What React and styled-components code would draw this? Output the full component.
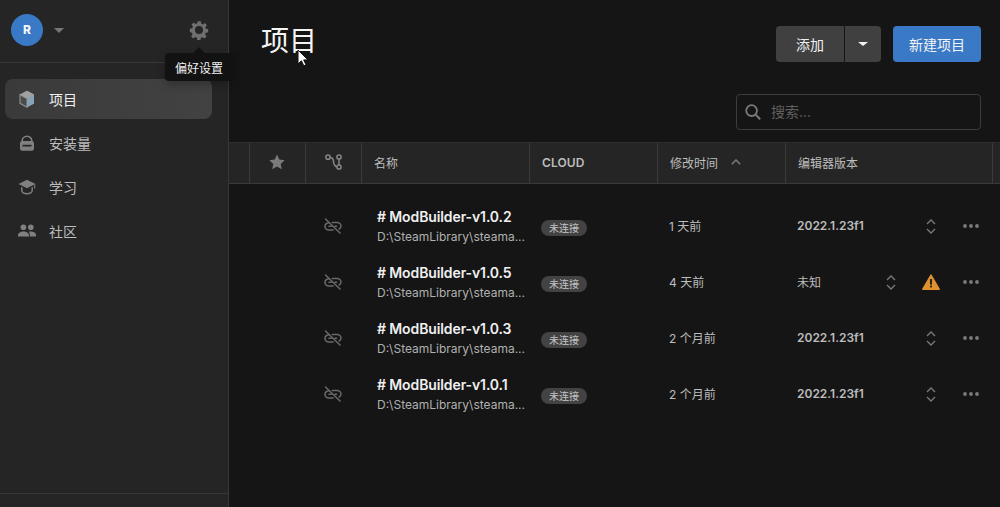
import React from 'react';
import styled, { createGlobalStyle } from 'styled-components';

const Global = createGlobalStyle`
  html, body { margin: 0; height: 100%; background: #151515; overflow: hidden; }
  #root { height: 100%; }
  * { box-sizing: border-box; }
`;

const FONT = `Inter, "Noto Sans CJK SC", "Noto Sans", sans-serif`;

const Shell = styled.div`
  display: flex; width: 1000px; height: 507px; position: relative;
  background: #151515; color: #e4e4e4; font-family: ${FONT}; overflow: hidden;
`;
const Sidebar = styled.aside`
  width: 229px; flex: none; height: 100%; background: #252525;
  border-right: 1px solid #383838; display: flex; flex-direction: column;
`;
const SideHead = styled.div`
  height: 63px; flex: none; border-bottom: 1px solid #383838;
  display: flex; align-items: center; padding: 0 19px 3px 11px; position: relative;
`;
const Avatar = styled.div`
  width: 32px; height: 32px; border-radius: 50%; background: #3a79c6; color: #f4f4f4;
  display: flex; align-items: center; justify-content: center; font-size: 12px; font-weight: 800;
`;
const Caret = styled.span`
  width: 0; height: 0; border-left: 5px solid transparent; border-right: 5px solid transparent;
  border-top: ${p => p.$h || 5}px solid ${p => p.$c || '#777'}; display: block;
`;
const AccountCaret = styled.div` margin-left: 11px; margin-top: 1px; flex: 1; `;
const Tooltip = styled.div`
  position: absolute; left: 165px; top: 53px; width: 68px; height: 28px; background: #121212;
  border-radius: 4px; color: #f0f0f0; font-size: 12px; display: flex; align-items: center;
  justify-content: center; box-shadow: 0 4px 8px rgba(0,0,0,.25); z-index: 5; white-space: nowrap;
  &::before {
    content: ''; position: absolute; left: 28px; top: -6px; width: 0; height: 0;
    border-left: 6px solid transparent; border-right: 6px solid transparent; border-bottom: 6px solid #121212;
  }
`;
const Nav = styled.nav` display: flex; flex-direction: column; padding: 16px 16px 0 5px; flex: 1; gap: 4px; `;
const NavItem = styled.div`
  height: 40px; border-radius: 8px; display: flex; align-items: center; padding: 0 0 1px 12px; gap: 12px;
  background: ${p => p.$active ? 'linear-gradient(90deg,#3a3a3a,#424242)' : 'transparent'};
  color: ${p => p.$active ? '#f0f0f0' : '#bdbdbd'}; font-size: 14px;
`;
const NavIcon = styled.span` width: 20px; height: 20px; display: flex; align-items: center; justify-content: center; flex: none; `;
const SideFoot = styled.div` height: 14px; flex: none; border-top: 1px solid #383838; `;

const Main = styled.main` flex: 1; display: flex; flex-direction: column; min-width: 0; `;
const TopBar = styled.div`
  height: 94px; flex: none; display: flex; justify-content: space-between; align-items: flex-start;
  padding: 19px 19px 0 32px;
`;
const Title = styled.h1` margin: 0; font-size: 28px; font-weight: 400; line-height: 44px; color: #f4f4f4; `;
const Actions = styled.div` display: flex; gap: 12px; margin-top: 7px; `;
const SplitButton = styled.div`
  display: flex; height: 36px; width: 105px; border-radius: 4px; overflow: hidden; background: #404040;
`;
const SplitMain = styled.div`
  width: 69px; border-right: 1px solid #151515; display: flex; align-items: center; justify-content: center;
  font-size: 14px; color: #f0f0f0;
`;
const SplitCaret = styled.div` flex: 1; display: flex; align-items: center; justify-content: center; `;
const Primary = styled.div`
  width: 88px; height: 36px; border-radius: 4px; background: #3a79c6; color: #f4f4f4;
  display: flex; align-items: center; justify-content: center; font-size: 14px;
`;
const SearchRow = styled.div` height: 48px; flex: none; display: flex; justify-content: flex-end; padding-right: 19px; `;
const Search = styled.div`
  width: 245px; height: 36px; border: 1px solid #3c3c3c; border-radius: 4px; display: flex; align-items: center;
  padding: 0 0 2px 8px; gap: 10px; font-size: 14px; color: #606060;
  svg { margin-top: 1px; }
`;
const COLS = '21px 56px 56px 168px 128px 128px 207px 1fr';
const HeaderRow = styled.div`
  display: grid; grid-template-columns: ${COLS}; height: 42px; flex: none; background: #252525;
  border-top: 1px solid #2e2e2e; border-bottom: 1px solid #3a3a3a;
`;
const HeadCell = styled.div`
  display: flex; align-items: center; justify-content: ${p => p.$center ? 'center' : 'flex-start'};
  padding: 0 ${p => p.$center ? 1 : 0}px 2px ${p => p.$center ? 0 : 12}px; font-size: 12px; color: #bdbdbd; gap: 13px;
  border-right: ${p => p.$last ? 'none' : '1px solid #3a3a3a'};
`;
const Cloud = styled.span` font-weight: 600; font-size: 12px; letter-spacing: .1px; `;
const Body = styled.div` padding-top: 14px; display: flex; flex-direction: column; `;
const Row = styled.div` display: grid; grid-template-columns: 76px 56px 168px 128px 128px 1fr; height: 56px; align-items: center; `;
const LinkCell = styled.div` display: flex; justify-content: center; `;
const NameCell = styled.div` padding-left: 16px; display: flex; flex-direction: column; min-width: 0; `;
const Name = styled.div` font-size: 14px; font-weight: 600; color: #f0f0f0; line-height: 20px; white-space: nowrap; letter-spacing: -.11px; `;
const Path = styled.div` font-size: 12px; color: #b0b0b0; line-height: 18px; margin-top: 1px; white-space: nowrap; `;
const CloudCell = styled.div` display: flex; padding-left: 12px; padding-top: 4px; `;
const Badge = styled.span`
  display: flex; align-items: center; justify-content: center; width: 46px; height: 16px; border-radius: 8px;
  background: #434343; color: #c4c4c4; font-size: 10px; line-height: 1;
`;
const TimeCell = styled.div` padding: 0 0 2px 12px; font-size: 12px; color: #bdbdbd; `;
const VersionCell = styled.div` display: flex; align-items: center; padding: 0 9px 0 12px; `;
const Version = styled.div` flex: 1; font-size: 12px; padding-bottom: 2px; font-weight: ${p => p.$bold ? 600 : 400}; color: #bdbdbd; `;
const Slot = styled.div` width: 40px; display: flex; justify-content: center; align-items: center; `;

const Cursor = styled.svg` position: absolute; left: 297px; top: 49px; z-index: 6; `;

const Gear = () => (
  <svg width="20" height="20" viewBox="0 0 24 24" fill="#6f6f6f">
    <path fillRule="evenodd" d="M14.2 1.5l.5 3 1.9.8 2.5-1.8 2.4 2.9-1.9 2.3.8 1.9 2.6.6v3.6l-2.9.5-.8 1.9 1.7 2.5-2.5 2.6-2.4-1.7-1.9.8-.5 2.8H10l-.6-2.9-1.9-.8-2.4 1.7-2.6-2.6 1.7-2.4-.8-1.9L1 14.5v-4l2.9-.5.8-1.9L3 5.6l2.6-2.6 2.4 1.7 1.9-.8.6-2.4h3.7zM12 7.2a4.8 4.8 0 100 9.6 4.8 4.8 0 000-9.6z"/>
  </svg>
);
const Cube = () => (
  <svg width="16" height="18" viewBox="0 0 16 18">
    <path d="M8 .8L15 4.6v8.8L8 17.2 1 13.4V4.6z" fill="#8a9aa6"/>
    <path d="M1 4.6L8 8.4v8.8L1 13.4z" fill="#4b4b4b" stroke="#8c8c8c" strokeWidth="1.2"/>
    <path d="M1 4.6L8 .8l7 3.8L8 8.4z" fill="#a0a0a0"/>
    <path d="M8 8.4L15 4.6v8.8L8 17.2z" fill="#88a3b6"/>
  </svg>
);
const Drive = () => (
  <svg width="16" height="16" viewBox="0 0 16 16">
    <path d="M3.2 7.5V6a4.8 4.8 0 019.6 0v1.5" fill="none" stroke="#808080" strokeWidth="1.6"/>
    <rect x="1" y="6" width="14" height="9.8" rx="2.2" fill="#808080"/>
    <rect x="3.5" y="9.8" width="9" height="1.7" fill="#252525"/>
  </svg>
);
const Cap = () => (
  <svg width="18" height="16" viewBox="0 0 18 16">
    <path d="M9 .8L17.5 5 9 9.3.5 5z" fill="#808080"/>
    <path d="M3.8 8.2v3.4c0 1.8 2.4 3.2 5.2 3.2s5.2-1.4 5.2-3.2V8.2" fill="none" stroke="#808080" strokeWidth="1.5"/>
    <path d="M16.7 5.5v4" stroke="#808080" strokeWidth="1.1"/>
  </svg>
);
const People = () => (
  <svg width="18" height="13" viewBox="0 0 18 13" fill="#808080">
    <circle cx="5.4" cy="3.2" r="2.8"/><circle cx="12.8" cy="3.2" r="2.8"/>
    <path d="M0 12.6v-1.8C0 8.7 3 7.4 5.5 7.4s5.4 1.3 5.4 3.4v1.8z"/>
    <path d="M11.8 12.6h6.2v-1.8c0-2.2-3-3.4-5.3-3.4-.7 0-1.3.1-1.9.3 1 .8 1 1.9 1 3.1z"/>
  </svg>
);
const Star = () => (
  <svg width="16" height="16" viewBox="0 0 16 16" fill="#7a7a7a">
    <path d="M8 .6l2.3 5 5.4.6-4 3.7 1.1 5.4L8 12.6l-4.8 2.7 1.1-5.4-4-3.7 5.4-.6z"/>
  </svg>
);
const Branch = () => (
  <svg width="17" height="16" viewBox="0 0 17 16" fill="none" stroke="#858585" strokeWidth="1.5">
    <circle cx="3" cy="3.2" r="2.1"/><circle cx="14" cy="3" r="2.1"/><circle cx="14" cy="13" r="2.1"/>
    <path d="M5.1 3.4c2 .1 2.9.9 3.2 2.8.3 2.4.1 5.8 3.6 6.8M14 5.1v5.8"/>
  </svg>
);
const LinkOff = () => (
  <svg width="18" height="16" viewBox="0 0 18 16" fill="none" stroke="#6a6a6a" strokeWidth="1.5" strokeLinecap="round">
    <path d="M1.5 1l14.5 14"/>
    <path d="M5 4.8C3 5 1 6.4 1 8.4s1.8 3.5 4 3.5h4.2"/>
    <path d="M8.3 4.6H13c2.2 0 4 1.5 4 3.5 0 1.2-.7 2.3-1.8 2.9"/>
    <path d="M5 8.3h2.2M11 8.3h1.6"/>
  </svg>
);
const Updown = () => (
  <svg width="10" height="15" viewBox="0 0 10 15" fill="none" stroke="#7a7a7a" strokeWidth="1.3">
    <path d="M1 5l4-4 4 4M1 10l4 4 4-4"/>
  </svg>
);
const Warn = () => (
  <svg width="18" height="16" viewBox="0 0 18 16">
    <path d="M9 1L17.2 15.2H.8z" fill="#de912e" stroke="#de912e" strokeWidth="1.4" strokeLinejoin="round"/>
    <rect x="8.1" y="5" width="1.8" height="5.6" fill="#151515"/>
    <rect x="8.1" y="11.6" width="1.8" height="1.8" fill="#151515"/>
  </svg>
);
const Dots = () => (
  <svg width="16" height="4" viewBox="0 0 16 4" fill="#7a7a7a">
    <circle cx="2" cy="2" r="1.9"/><circle cx="8" cy="2" r="1.9"/><circle cx="14" cy="2" r="1.9"/>
  </svg>
);
const SearchIcon = () => (
  <svg width="16" height="16" viewBox="0 0 16 16" fill="none" stroke="#7a7a7a" strokeWidth="1.8">
    <circle cx="6.6" cy="6.6" r="5.4"/><path d="M10.6 10.6l4.6 4.6" strokeWidth="2"/>
  </svg>
);
const Chevron = () => (
  <svg width="10" height="6" viewBox="0 0 10 6" fill="none" stroke="#7a7a7a" strokeWidth="1.5"><path d="M.8 5.2L5 1l4.2 4.2"/></svg>
);

const projects = [
  { name: '# ModBuilder-v1.0.2', time: '1 天前', version: '2022.1.23f1' },
  { name: '# ModBuilder-v1.0.5', time: '4 天前', version: '未知', warn: true },
  { name: '# ModBuilder-v1.0.3', time: '2 个月前', version: '2022.1.23f1' },
  { name: '# ModBuilder-v1.0.1', time: '2 个月前', version: '2022.1.23f1' },
];

export default function App() {
  return (
    <Shell>
      <Global />
      <Sidebar>
        <SideHead>
          <Avatar>R</Avatar>
          <AccountCaret><Caret /></AccountCaret>
          <Gear />
          <Tooltip>偏好设置</Tooltip>
        </SideHead>
        <Nav>
          <NavItem $active><NavIcon><Cube /></NavIcon>项目</NavItem>
          <NavItem><NavIcon><Drive /></NavIcon>安装量</NavItem>
          <NavItem><NavIcon><Cap /></NavIcon>学习</NavItem>
          <NavItem><NavIcon><People /></NavIcon>社区</NavItem>
        </Nav>
        <SideFoot />
      </Sidebar>
      <Main>
        <TopBar>
          <Title>项目</Title>
          <Actions>
            <SplitButton>
              <SplitMain>添加</SplitMain>
              <SplitCaret><Caret $c="#f0f0f0" $h={4} /></SplitCaret>
            </SplitButton>
            <Primary>新建项目</Primary>
          </Actions>
        </TopBar>
        <SearchRow>
          <Search><SearchIcon />搜索...</Search>
        </SearchRow>
        <HeaderRow>
          <HeadCell />
          <HeadCell $center><Star /></HeadCell>
          <HeadCell $center><Branch /></HeadCell>
          <HeadCell>名称</HeadCell>
          <HeadCell><Cloud>CLOUD</Cloud></HeadCell>
          <HeadCell>修改时间<Chevron /></HeadCell>
          <HeadCell>编辑器版本</HeadCell>
          <HeadCell $last />
        </HeaderRow>
        <Body>
          {projects.map(p => (
            <Row key={p.name}>
              <div />
              <LinkCell><LinkOff /></LinkCell>
              <NameCell>
                <Name>{p.name}</Name>
                <Path>D:\SteamLibrary\steama...</Path>
              </NameCell>
              <CloudCell><Badge>未连接</Badge></CloudCell>
              <TimeCell>{p.time}</TimeCell>
              <VersionCell>
                <Version $bold={!p.warn}>{p.version}</Version>
                <Slot><Updown /></Slot>
                {p.warn && <Slot><Warn /></Slot>}
                <Slot><Dots /></Slot>
              </VersionCell>
            </Row>
          ))}
        </Body>
      </Main>
      <Cursor width="12" height="18" viewBox="0 0 12 18">
        <path d="M1 1v14l3.4-3.2 2.4 5 2.2-1-2.3-4.9H11z" fill="#fff" stroke="#111" strokeWidth="1"/>
      </Cursor>
    </Shell>
  );
}
